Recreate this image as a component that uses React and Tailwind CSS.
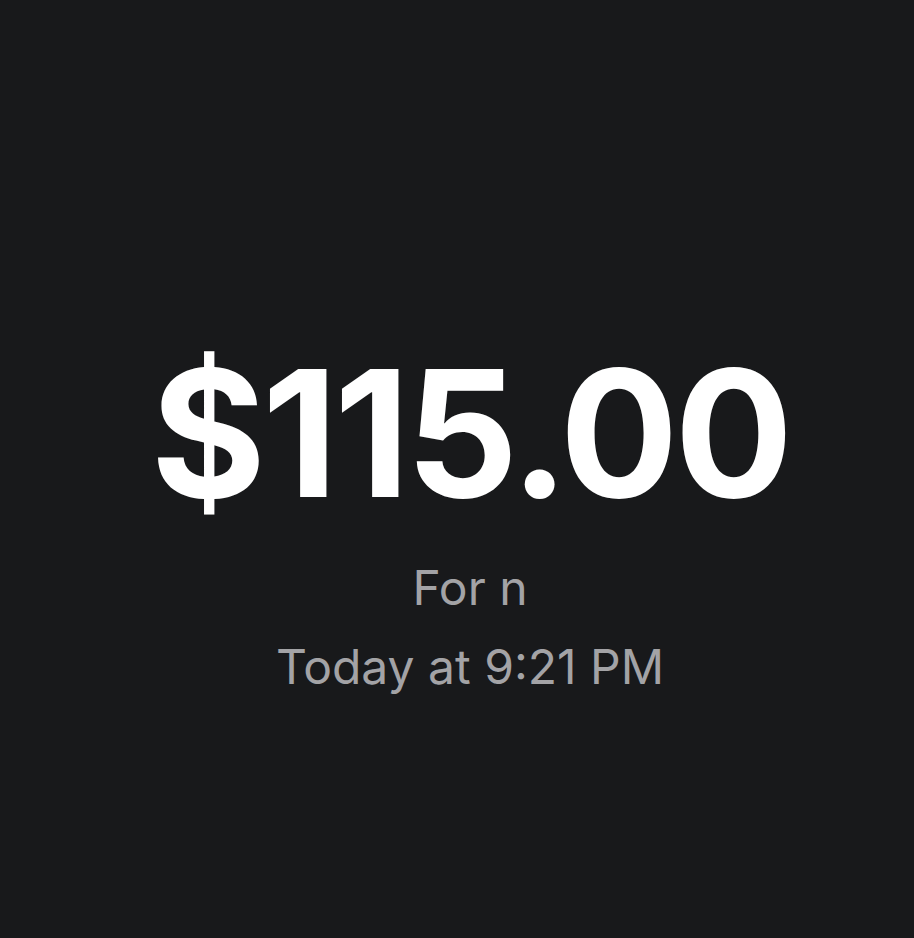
export default function App() {
  return (
    <div
      className="w-[914px] h-[938px] bg-[#18191b] flex flex-col items-center pl-[26px]"
      style={{ fontFamily: "Inter, 'Noto Sans', sans-serif" }}
    >
      <div className="mt-[333px] text-[176px] leading-[200px] font-bold text-white tracking-[-4px]">
        $115.00
      </div>
      <div className="mt-[27px] text-[48px] leading-[56px] text-[#a3a3a6]">For n</div>
      <div className="mt-[23px] text-[48px] leading-[56px] text-[#a3a3a6]">Today at 9:21 PM</div>
    </div>
  );
}
